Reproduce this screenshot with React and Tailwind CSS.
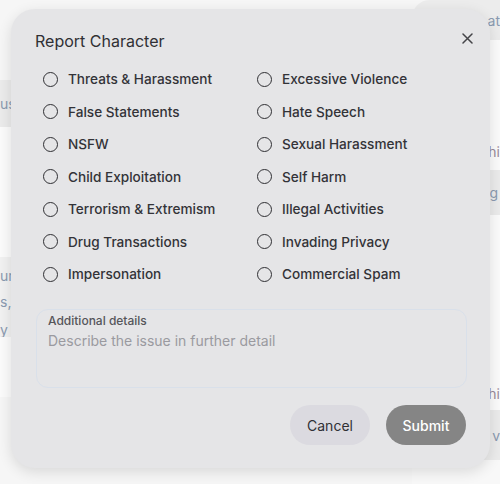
import React from "react";

const left = [
  "Threats & Harassment",
  "False Statements",
  "NSFW",
  "Child Exploitation",
  "Terrorism & Extremism",
  "Drug Transactions",
  "Impersonation",
];

const right = [
  "Excessive Violence",
  "Hate Speech",
  "Sexual Harassment",
  "Self Harm",
  "Illegal Activities",
  "Invading Privacy",
  "Commercial Spam",
];

function Option({ label }) {
  return (
    <label className="flex items-center gap-[10px] h-[32.5px] cursor-pointer">
      <span className="w-[15px] h-[15px] rounded-full border-[1.5px] border-[#2f2f33] shrink-0" />
      <span className="text-[13.6px] font-medium text-[#333338]">{label}</span>
    </label>
  );
}

function App() {
  return (
    <div
      className="relative w-[500px] h-[484px] overflow-hidden bg-[#f6f6f6]"
      style={{ fontFamily: "Inter, 'Noto Sans', sans-serif" }}
    >
      {/* page behind the dialog */}
      <div className="flex flex-col pt-[80px] text-[#8a9ab0] text-[14px]">
        <div className="h-[47px] bg-[#ebebeb] flex items-center">us</div>
        <div className="h-[130px] bg-[#fbfbfb]" />
        <div className="h-[80px] bg-[#f1f1f1] flex flex-col pt-[6px] leading-[26px]">
          <span>ur</span>
          <span>s,</span>
          <span className="pt-[2px]">y</span>
        </div>
        <div className="h-[60px] bg-[#fbfbfb]" />
      </div>
      <div className="absolute right-0 top-0 w-[88px] h-full flex flex-col text-[#8a9ab0] text-[14px]">
        <div className="h-[40px] bg-[#ececec] rounded-bl-[18px] rounded-tl-[18px] flex items-center justify-end">at</div>
        <div className="h-[130px] bg-[#fbfbfb] flex items-end justify-end pb-[8px] text-[#9a8a9a]">hi</div>
        <div className="h-[45px] bg-[#ebebeb] flex items-center justify-end pr-[2px]">g</div>
        <div className="h-[195px] bg-[#fbfbfb] flex items-end justify-end pb-[6px] text-[#9a8a9a]">hi</div>
        <div className="h-[50px] bg-[#ebebeb] flex items-center justify-end">v</div>
        <div className="flex-1 bg-[#f8f8f8]" />
      </div>

      {/* dialog */}
      <div className="absolute left-[11px] top-[9px] w-[479px] h-[459px] rounded-[24px] bg-[#e5e5e7] shadow-[0_4px_14px_rgba(0,0,0,0.12)] flex flex-col px-[24px] pt-[20px] pb-[23px]">
        <div className="flex items-start justify-between">
          <h2 className="text-[16px] leading-[24px] text-[#303035]">Report Character</h2>
          <button className="mt-[-1px] mr-[-11px] w-[20px] h-[20px] flex items-center justify-center text-[#444448]">
            <svg width="11" height="11" viewBox="0 0 11 11" fill="none" stroke="currentColor" strokeWidth="1.5" strokeLinecap="round">
              <path d="M1 1L10 10M10 1L1 10" />
            </svg>
          </button>
        </div>

        <div className="grid grid-cols-[214px_1fr] pl-[8px] mt-[10px]">
          <div className="flex flex-col">
            {left.map((l) => (
              <Option key={l} label={l} />
            ))}
          </div>
          <div className="flex flex-col">
            {right.map((l) => (
              <Option key={l} label={l} />
            ))}
          </div>
        </div>

        <div className="mt-[18px] ml-[1px] mr-[-1px] h-[79px] rounded-[12px] border border-[#d9e0ea] px-[11px] pt-[3px]">
          <div className="text-[12px] leading-[16px] font-medium text-[#55555a]">Additional details</div>
          <div className="text-[14px] leading-[24px] text-[#9a9aa0]">Describe the issue in further detail</div>
        </div>

        <div className="mt-auto flex justify-end gap-[16px]">
          <button className="w-[80px] h-[40px] rounded-full bg-[#dbdae0] text-[14px] text-[#303035]">Cancel</button>
          <button className="w-[80px] h-[40px] rounded-full bg-[#858585] text-[14px] font-medium text-white">Submit</button>
        </div>
      </div>
    </div>
  );
}

export default App;
